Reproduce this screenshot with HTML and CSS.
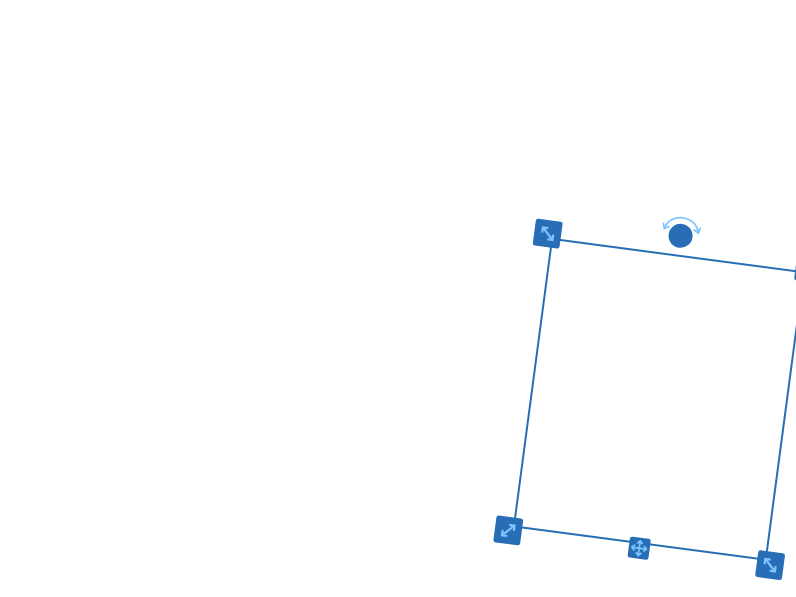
FILE: index.html
```html
<!DOCTYPE html>
<html lang="en">
<head>
<meta charset="utf-8">
<title>Canvas</title>
<link rel="stylesheet" href="styles.css">
</head>
<body>
<svg class="symbols" aria-hidden="true">
  <symbol id="resize" viewBox="0 0 26 26"><path d="M8 8L18 18M7.6 12.8V7.6H12.8M18.4 13.2V18.4H13.2"/></symbol>
  <symbol id="move" viewBox="0 0 22 22"><path d="M11 4V18M4 11H18M8 6.3L11 3.3L14 6.3M8 15.7L11 18.7L14 15.7M6.3 8L3.3 11L6.3 14M15.7 8L18.7 11L15.7 14"/></symbol>
</svg>
<main class="canvas">
  <div class="selection">
    <div class="handle nw"><svg><use href="#resize"/></svg></div>
    <div class="handle ne"><svg><use href="#resize"/></svg></div>
    <div class="handle sw"><svg><use href="#resize"/></svg></div>
    <div class="handle se"><svg><use href="#resize"/></svg></div>
    <div class="handle move"><svg><use href="#move"/></svg></div>
    <svg class="rotate" viewBox="0 0 44 44">
      <path d="M5 16.6C7 8.8 13.5 3.8 22 3.8S37 8.8 39 16.6M3.2 11.2L4.8 17L10 14M40.8 11.2L39.2 17L34 14"/>
      <circle cx="22" cy="22" r="12"/>
    </svg>
  </div>
</main>
</body>
</html>
```

FILE: styles.css
```css
body {
  margin: 0;
  background: #fff;
}

.symbols {
  position: absolute;
  width: 0;
  height: 0;
}

.canvas {
  position: relative;
  width: 100vw;
  height: 100vh;
  overflow: hidden;
}

.selection {
  position: absolute;
  left: 531px;
  top: 253px;
  width: 256px;
  height: 292px;
  box-sizing: border-box;
  border: 2px solid #286eb6;
  transform: translate(-0.1px, 0.4px) rotate(7.55deg);
}

.handle {
  position: absolute;
  width: 27px;
  height: 27px;
  border-radius: 2.5px;
  background: #286eb6;
}

.handle svg {
  display: block;
  width: 100%;
  height: 100%;
  fill: none;
  stroke: #7fc4ff;
  stroke-width: 2.1;
}

.nw { left: -19px; top: -19px; transform: translate(-0.5px, -0.2px); }
.ne { right: -19px; top: -19px; transform: translate(0.2px, -0.2px); }
.sw { left: -19px; bottom: -19px; transform: translate(-0.6px, 0.2px); }
.se { right: -19px; bottom: -19px; transform: translate(0.5px, 0.2px); }

.ne svg,
.sw svg {
  transform: scaleX(-1);
}

.move {
  width: 21px;
  height: 21px;
  left: 115px;
  bottom: -17px;
  transform: translate(0.5px, -0.4px);
}

.move svg {
  stroke-width: 1.8;
}

.rotate {
  position: absolute;
  left: 104px;
  top: -43px;
  width: 44px;
  height: 44px;
  fill: none;
  stroke: #7fc4ff;
  stroke-width: 1.7;
}

.rotate circle {
  fill: #286eb6;
  stroke: none;
}
```
